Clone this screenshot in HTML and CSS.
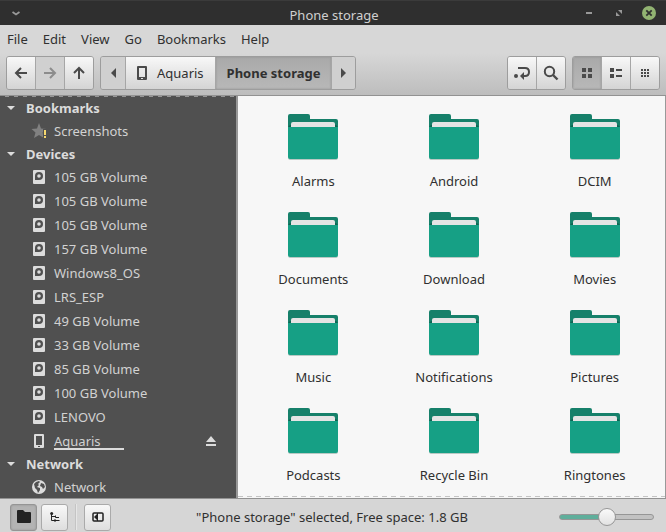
FILE: index.html
```html
<!DOCTYPE html>
<html lang="en">
<head>
<meta charset="utf-8">
<title>Phone storage</title>
<link rel="stylesheet" href="styles.css">
</head>
<body>
<svg class="sprites" aria-hidden="true">
  <symbol id="folder" viewBox="0 0 50 46">
    <path fill="#16806a" d="M0 2Q0 0 2 0H20Q22 0 22 2V5H48Q50 5 50 7V18H0Z"/>
    <path fill="#0e6452" d="M0 13L2 11H48L50 13V15H0Z"/>
    <path fill="#e4e4e4" d="M3 10Q3 8 5 8H45Q47 8 47 10V16H3Z"/>
    <path fill="#b9c9c4" d="M0 43H50Q50 46 48 46H2Q0 46 0 43Z"/>
    <path fill="#16a085" d="M0 13H50V43Q50 45 48 45H2Q0 45 0 43Z"/>
  </symbol>
  <symbol id="disk" viewBox="0 0 12 14">
    <path fill="currentColor" fill-rule="evenodd" d="M1 0H11Q12 0 12 1V13Q12 14 11 14H1Q0 14 0 13V1Q0 0 1 0ZM6 2A4 4 0 0 0 2 6V10H6A4 4 0 0 0 6 2ZM6 4.200A1.800 1.800 0 1 1 6 7.800A1.800 1.800 0 1 1 6 4.200Z"/>
  </symbol>
  <symbol id="phone" viewBox="0 0 10 14">
    <path fill="currentColor" fill-rule="evenodd" d="M1 0H9Q10 0 10 1V13Q10 14 9 14H1Q0 14 0 13V1Q0 0 1 0ZM2 2V11H8V2ZM4 12V13H6V12Z"/>
  </symbol>
  <symbol id="caret" viewBox="0 0 8 4"><path fill="currentColor" d="M0 0H8L4 4Z"/></symbol>
</svg>

<header class="titlebar">
  <button class="window-menu" aria-label="Window menu"><svg width="8" height="5" viewBox="0 0 8 5"><path d="M.5 1L4 3.500 7.500 1" fill="none" stroke="#999" stroke-width="1.800"/></svg></button>
  <h1>Phone storage</h1>
  <div class="window-controls">
    <button aria-label="Minimize"><svg width="14" height="14" viewBox="0 0 14 14"><path fill="#999" d="M4 6H10V8H4Z"/></svg></button>
    <button aria-label="Maximize"><svg width="14" height="14" viewBox="0 0 14 14"><path fill="#999" d="M6 4H10V8ZM4 6L8 10H4Z"/></svg></button>
    <button aria-label="Close"><svg width="14" height="14" viewBox="0 0 14 14"><circle cx="7" cy="7" r="7" fill="#92b372"/><path d="M4.300 4.300L9.700 9.700M9.700 4.300L4.300 9.700" stroke="#2f2f2f" stroke-width="1.800"/></svg></button>
  </div>
</header>

<div class="chrome">
  <nav class="menubar">
    <button>File</button><button>Edit</button><button>View</button><button>Go</button><button>Bookmarks</button><button>Help</button>
  </nav>
  <div class="toolbar">
    <div class="group">
      <button class="tool" aria-label="Back"><svg width="16" height="16" viewBox="0 0 16 16"><path class="line" d="M14 8H3M8 3L3 8L8 13"/></svg></button>
      <button class="tool flat" aria-label="Forward" disabled><svg width="16" height="16" viewBox="0 0 16 16"><path class="line" d="M2 8H13M8 3L13 8L8 13"/></svg></button>
      <button class="tool" aria-label="Up"><svg width="16" height="16" viewBox="0 0 16 16"><path class="line" d="M8 14V3M3 8L8 3L13 8"/></svg></button>
    </div>
    <div class="group path">
      <button class="step flat" aria-label="Previous path"><svg width="5" height="10" viewBox="0 0 5 10"><path fill="currentColor" d="M5 0V10L0 5Z"/></svg></button>
      <button class="crumb"><svg width="10" height="14"><use href="#phone"/></svg>Aquaris</button>
      <button class="crumb active" aria-current="page">Phone storage</button>
      <button class="step flat" aria-label="Next path"><svg width="5" height="10" viewBox="0 0 5 10"><path fill="currentColor" d="M0 0V10L5 5Z"/></svg></button>
    </div>
    <div class="group push">
      <button class="tool" aria-label="Toggle location entry"><svg width="18" height="16" viewBox="0 0 18 16"><circle cx="3" cy="11" r="2" fill="currentColor"/><path d="M5 3H12Q16 3 16 7Q16 11 12 11H10" fill="none" stroke="currentColor" stroke-width="2"/><path fill="currentColor" d="M7 11L11 7V15Z"/></svg></button>
      <button class="tool" aria-label="Search"><svg width="16" height="16" viewBox="0 0 16 16"><circle cx="6.500" cy="6.500" r="4.700" fill="none" stroke="currentColor" stroke-width="2"/><path d="M10 10L14.500 14.500" stroke="currentColor" stroke-width="2.400"/></svg></button>
    </div>
    <div class="group">
      <button class="tool active" aria-label="Icon view" aria-pressed="true"><svg width="10" height="10" viewBox="0 0 10 10"><path fill="currentColor" d="M0 0H4V4H0ZM6 0H10V4H6ZM0 6H4V10H0ZM6 6H10V10H6Z"/></svg></button>
      <button class="tool" aria-label="List view"><svg width="12" height="10" viewBox="0 0 12 10"><path fill="currentColor" d="M0 0H4V4H0ZM6 1H12V3H6ZM0 6H4V10H0ZM6 7H12V9H6Z"/></svg></button>
      <button class="tool" aria-label="Compact view"><svg width="8" height="8" viewBox="0 0 8 8"><path stroke="currentColor" stroke-width="2" stroke-dasharray="2 1" d="M0 1H8M0 4H8M0 7H8"/></svg></button>
    </div>
  </div>
</div>

<div class="content">
  <aside class="sidebar">
    <h2><svg width="8" height="4"><use href="#caret"/></svg>Bookmarks</h2>
    <ul>
      <li><a href="#"><svg width="16" height="16" viewBox="0 0 16 16"><path fill="#818181" d="M8 0L10 5.500L15.500 6L11.500 9.500L13 15L8 12L3 15L4.500 9.500L.5 6L6 5.500Z"/><path fill="#505050" d="M12 6H16V16H12Z"/><path fill="#f5d76e" d="M13 7H15V12H13ZM13 13H15V15H13Z"/></svg><span>Screenshots</span></a></li>
    </ul>
    <h2><svg width="8" height="4"><use href="#caret"/></svg>Devices</h2>
    <ul>
      <li><a href="#"><svg width="12" height="14"><use href="#disk"/></svg><span>105 GB Volume</span></a></li>
      <li><a href="#"><svg width="12" height="14"><use href="#disk"/></svg><span>105 GB Volume</span></a></li>
      <li><a href="#"><svg width="12" height="14"><use href="#disk"/></svg><span>105 GB Volume</span></a></li>
      <li><a href="#"><svg width="12" height="14"><use href="#disk"/></svg><span>157 GB Volume</span></a></li>
      <li><a href="#"><svg width="12" height="14"><use href="#disk"/></svg><span>Windows8_OS</span></a></li>
      <li><a href="#"><svg width="12" height="14"><use href="#disk"/></svg><span>LRS_ESP</span></a></li>
      <li><a href="#"><svg width="12" height="14"><use href="#disk"/></svg><span>49 GB Volume</span></a></li>
      <li><a href="#"><svg width="12" height="14"><use href="#disk"/></svg><span>33 GB Volume</span></a></li>
      <li><a href="#"><svg width="12" height="14"><use href="#disk"/></svg><span>85 GB Volume</span></a></li>
      <li><a href="#"><svg width="12" height="14"><use href="#disk"/></svg><span>100 GB Volume</span></a></li>
      <li><a href="#"><svg width="12" height="14"><use href="#disk"/></svg><span>LENOVO</span></a></li>
      <li><a href="#"><svg width="10" height="14"><use href="#phone"/></svg><span class="usage">Aquaris</span></a><button class="eject" aria-label="Eject Aquaris"><svg width="10" height="10" viewBox="0 0 10 10"><path fill="currentColor" d="M5 0L10 6H0ZM0 8H10V10H0Z"/></svg></button></li>
    </ul>
    <h2><svg width="8" height="4"><use href="#caret"/></svg>Network</h2>
    <ul>
      <li><a href="#"><svg width="14" height="14" viewBox="0 0 14 14"><circle cx="7" cy="7" r="7" fill="currentColor"/><path fill="#505050" d="M2 4L4 2L7 1L8 2L6 4L7 5L5 7L8 8L8 10L6 13L5 10L3 8ZM9 3L12 4L13 7L11 9L10 7L8 6Z"/></svg><span>Network</span></a></li>
    </ul>
  </aside>
  <main class="files">
    <a href="#"><svg><use href="#folder"/></svg>Alarms</a>
    <a href="#"><svg><use href="#folder"/></svg>Android</a>
    <a href="#"><svg><use href="#folder"/></svg>DCIM</a>
    <a href="#"><svg><use href="#folder"/></svg>Documents</a>
    <a href="#"><svg><use href="#folder"/></svg>Download</a>
    <a href="#"><svg><use href="#folder"/></svg>Movies</a>
    <a href="#"><svg><use href="#folder"/></svg>Music</a>
    <a href="#"><svg><use href="#folder"/></svg>Notifications</a>
    <a href="#"><svg><use href="#folder"/></svg>Pictures</a>
    <a href="#"><svg><use href="#folder"/></svg>Podcasts</a>
    <a href="#"><svg><use href="#folder"/></svg>Recycle Bin</a>
    <a href="#"><svg><use href="#folder"/></svg>Ringtones</a>
  </main>
</div>

<footer class="statusbar">
  <div class="panes">
    <button class="active" aria-label="Show places" aria-pressed="true"><svg width="14" height="14" viewBox="0 0 14 14"><path fill="#222" d="M0 1Q0 0 1 0H6L8 2H13Q14 2 14 3V12Q14 13 13 13H1Q0 13 0 12Z"/></svg></button>
    <button aria-label="Show treeview"><svg width="10" height="10" viewBox="0 0 10 10"><circle cx="1.700" cy="1.500" r="1.500" fill="#222"/><path d="M1.500 2V8.500H9.500M2 4.500H5.500M5.500 3.500V5.500H9M5 7V10" fill="none" stroke="#222"/></svg></button>
    <span class="divider"></span>
    <button aria-label="Hide the sidebar"><svg width="12" height="10" viewBox="0 0 12 10"><rect x="1" y="1" width="10" height="8" rx="1" fill="none" stroke="#222" stroke-width="1.500"/><path fill="#222" d="M5 2V8L2 5Z"/><path stroke="#222" d="M5.500 1V9"/></svg></button>
  </div>
  <p>"Phone storage" selected, Free space: 1.8 GB</p>
  <input class="zoom" type="range" min="0" max="100" value="50" aria-label="Zoom level">
</footer>
</body>
</html>
```

FILE: styles.css
```css
* { box-sizing: border-box; }

body {
  margin: 0;
  height: 100vh;
  display: flex;
  flex-direction: column;
  overflow: hidden;
  background: #d6d6d6;
  color: #303030;
  font: 13px/18px "Noto Sans", sans-serif;
}

h1, h2, ul, p { margin: 0; padding: 0; font-size: inherit; }
button { margin: 0; padding: 0; border: 0; background: none; color: inherit; font: inherit; }
a { color: inherit; text-decoration: none; }
svg { display: block; flex: none; }
.sprites { position: absolute; width: 0; height: 0; }

.titlebar {
  display: grid;
  grid-template-columns: 1fr auto 1fr;
  align-items: center;
  height: 25px;
  padding: 0 10px 0 12px;
  background: #2f2f2f;
  border-top: 1px solid #3b3b3b;
  color: #d0d0d0;
}
.titlebar h1 { padding-top: 4px; font-weight: 400; }
.window-menu { justify-self: start; }
.window-controls { display: flex; justify-content: flex-end; gap: 16px; }

.chrome {
  background: linear-gradient(#d7d7d7 0, #d7d7d7 28px, #bdbdbd 100%);
  border-bottom: 1px solid #929292;
}
.menubar { display: flex; gap: 15px; padding: 5px 7px; }
.toolbar { display: flex; gap: 6px; padding: 3px 6px 5px; }
.group {
  display: flex;
  height: 34px;
  border: 1px solid #9d9d9d;
  border-radius: 3px;
  overflow: hidden;
  color: #4a4a4a;
}
.push { margin-left: auto; }
.group button {
  display: flex;
  align-items: center;
  justify-content: center;
  gap: 10px;
  background: linear-gradient(#f8f8f8, #d4d4d4);
}
.group button + button { border-left: 1px solid #a6a6a6; }
.group .flat { background: #d0d0d0; }
.group .tool { width: 29px; }
.group .tool:first-child { width: 28px; }
.group .tool:disabled { color: #8c8c8c; }
.group .step { width: 24px; }
.group .crumb { padding: 0 11px; color: #303030; }
.crumb svg { color: #4a4a4a; }
.group .active {
  background: linear-gradient(#a9a9a9, #b8b8b8);
  box-shadow: inset 0 0 2px #8e8e8e;
}
.crumb.active { font-weight: 700; }
.line { fill: none; stroke: currentColor; stroke-width: 2; }

.content { display: flex; flex: 1; min-height: 0; }
.sidebar {
  flex: 0 0 238px;
  padding-top: 1px;
  background: repeating-linear-gradient(90deg, #505050 0 5px, #979797 5px 9px) top / 100% 1px no-repeat #505050;
  border-right: 2px solid #979797;
  color: #dcdcdc;
}
.sidebar h2 {
  display: flex;
  align-items: center;
  gap: 11px;
  height: 22px;
  padding-left: 7px;
}
.sidebar ul { list-style: none; }
.sidebar li { display: flex; align-items: center; height: 24px; padding-right: 20px; }
.sidebar li a { display: grid; grid-template-columns: 16px 1fr; align-items: center; justify-items: center; gap: 7px; padding-left: 31px; color: #d2d2d2; }
.sidebar li span { justify-self: start; }
.sidebar li svg { color: #dcdcdc; }
.usage { width: 70px; height: 18px; border-bottom: 2px solid #dcdcdc; }
.eject { margin-left: auto; }

.files {
  flex: 1;
  display: grid;
  grid-template-columns: repeat(3, 1fr);
  grid-auto-rows: 98px;
  padding: 9px 0 0 5px;
  background: repeating-linear-gradient(90deg, #c4c4c4 0 5px, #f7f7f7 5px 9px) left bottom 1px / 100% 1px no-repeat #f7f7f7;
  border-right: 1px solid #999;
}
.files a { display: flex; flex-direction: column; align-items: center; gap: 12px; padding-top: 9px; }
.files svg { width: 50px; height: 46px; }

.statusbar {
  display: grid;
  grid-template-columns: 1fr auto 1fr;
  align-items: center;
  height: 34px;
  padding: 3px 12px 0 10px;
  background: #d6d6d6;
  border-top: 1px solid #929292;
}
.panes { display: flex; align-items: center; gap: 4px; }
.panes button {
  display: grid;
  place-items: center;
  width: 27px;
  height: 27px;
  border: 1px solid #aaa;
  border-radius: 3px;
  background: linear-gradient(#f8f8f8, #dedede);
}
.panes .active { background: #b3b3b3; border-color: #959595; box-shadow: inset 0 0 2px #8e8e8e; }
.divider { width: 2px; height: 26px; margin: 0 3px; border-left: 1px solid #c4c4c4; border-right: 1px solid #e6e6e6; }

.zoom { appearance: none; justify-self: end; width: 95px; height: 20px; margin: 0; background: none; }
.zoom::-webkit-slider-runnable-track {
  height: 6px;
  border: 1px solid #969696;
  border-radius: 3px;
  background: linear-gradient(90deg, #5fae9b 50%, #c2c2c2 50%);
}
.zoom::-webkit-slider-thumb {
  appearance: none;
  width: 18px;
  height: 18px;
  margin-top: -7px;
  border: 1px solid #969696;
  border-radius: 50%;
  background: linear-gradient(#fafafa, #e2e2e2);
}
```
